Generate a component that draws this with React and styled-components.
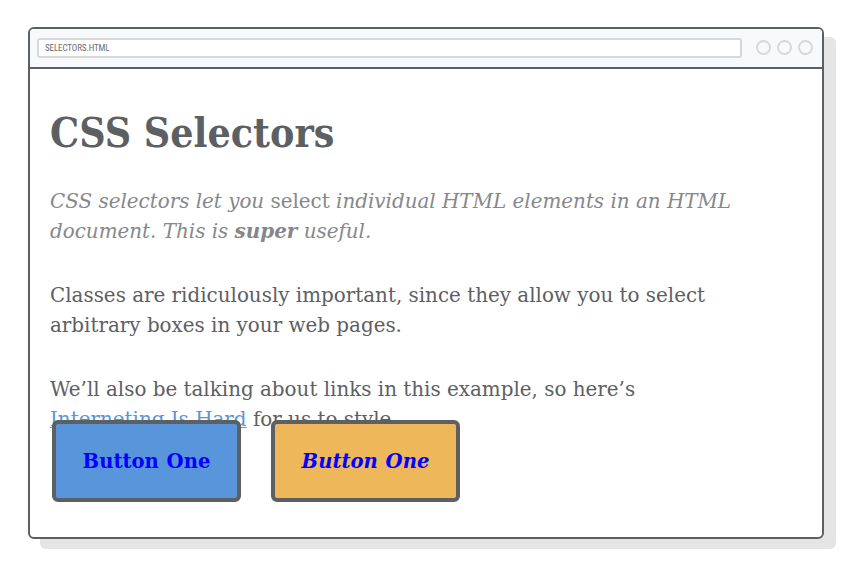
import styled, { createGlobalStyle } from "styled-components";

const Global = createGlobalStyle`
  html, body {
    margin: 0;
    padding: 0;
    background: #fff;
  }
`;

const Page = styled.div`
  width: 854px;
  height: 572px;
  padding: 27px 0 0 28px;
  box-sizing: border-box;
`;

const Window = styled.div`
  width: 796px;
  height: 512px;
  box-sizing: border-box;
  border: 2px solid #5d6063;
  border-radius: 6px;
  background: #fff;
  box-shadow: 12px 10px 0 0 #e5e5e5;
  overflow: hidden;
  display: flex;
  flex-direction: column;
`;

const TitleBar = styled.div`
  height: 40px;
  box-sizing: border-box;
  background: #f8f9fa;
  border-bottom: 2px solid #5d6063;
  display: flex;
  align-items: center;
  padding: 0 9px 1px 7px;
  gap: 14px;
`;

const UrlBar = styled.div`
  flex: 1;
  height: 20px;
  box-sizing: border-box;
  border: 2px solid #d6d8da;
  border-radius: 3px;
  background: #fff;
  display: flex;
  align-items: center;
  padding-left: 6px;
  font-family: "Roboto", "Liberation Sans", sans-serif;
  font-stretch: condensed;
  font-size: 9px;
  letter-spacing: -0.1px;
  color: #6b6e71;
`;

const Dots = styled.div`
  display: flex;
  gap: 6px;
`;

const Dot = styled.span`
  width: 15px;
  height: 15px;
  box-sizing: border-box;
  border: 2px solid #d6d8da;
  border-radius: 50%;
`;

const Content = styled.div`
  padding: 20px 20px 0 20px;
  font-family: "DejaVu Serif", serif;
  color: #5d6063;
`;

const Heading = styled.h1`
  margin: 18px 0 0 0;
  font-size: 40.7px;
  font-stretch: condensed;
  line-height: 52px;
  font-weight: bold;
  color: #5d6063;
`;

const Para = styled.p`
  margin: ${p => p.$top}px 0 0 0;
  max-width: 696px;
  font-size: 19.9px;
  line-height: 29.5px;
  color: ${p => (p.$faded ? "#85888b" : "#5d6063")};
  font-style: ${p => (p.$italic ? "italic" : "normal")};
`;

const Plain = styled.span`
  font-style: normal;
`;

const Link = styled.a`
  color: #5995da;
  text-decoration: underline;
`;

const Buttons = styled.div`
  display: flex;
  gap: 30px;
  padding-left: 2px;
  margin-top: -14px;
  position: relative;
`;

const Button = styled.button`
  width: 189px;
  height: 82px;
  box-sizing: border-box;
  border: 4px solid #5d6063;
  border-radius: 6px;
  background: ${p => p.$bg};
  color: #0000ff;
  font-family: "DejaVu Serif", serif;
  font-weight: bold;
  font-size: 19.6px;
  font-style: ${p => (p.$italic ? "italic" : "normal")};
  word-spacing: 1px;
  padding: 0;
  margin: 0;
`;

export default function App() {
  return (
    <>
      <Global />
      <Page>
        <Window>
          <TitleBar>
            <UrlBar>SELECTORS.HTML</UrlBar>
            <Dots>
              <Dot />
              <Dot />
              <Dot />
            </Dots>
          </TitleBar>
          <Content>
            <Heading>CSS Selectors</Heading>
            <Para $top={28} $italic $faded>
              CSS selectors let you <Plain>select</Plain> individual HTML elements in an HTML
              document. This is <b>super</b> useful.
            </Para>
            <Para $top={35}>
              Classes are ridiculously important, since they allow you to select arbitrary
              boxes in your web pages.
            </Para>
            <Para $top={35}>
              We’ll also be talking about links in this example, so here’s{" "}
              <Link href="#">Interneting Is Hard</Link> for us to style.
            </Para>
            <Buttons>
              <Button $bg="#5995da">Button One</Button>
              <Button $bg="#eeb75a" $italic>Button One</Button>
            </Buttons>
          </Content>
        </Window>
      </Page>
    </>
  );
}
